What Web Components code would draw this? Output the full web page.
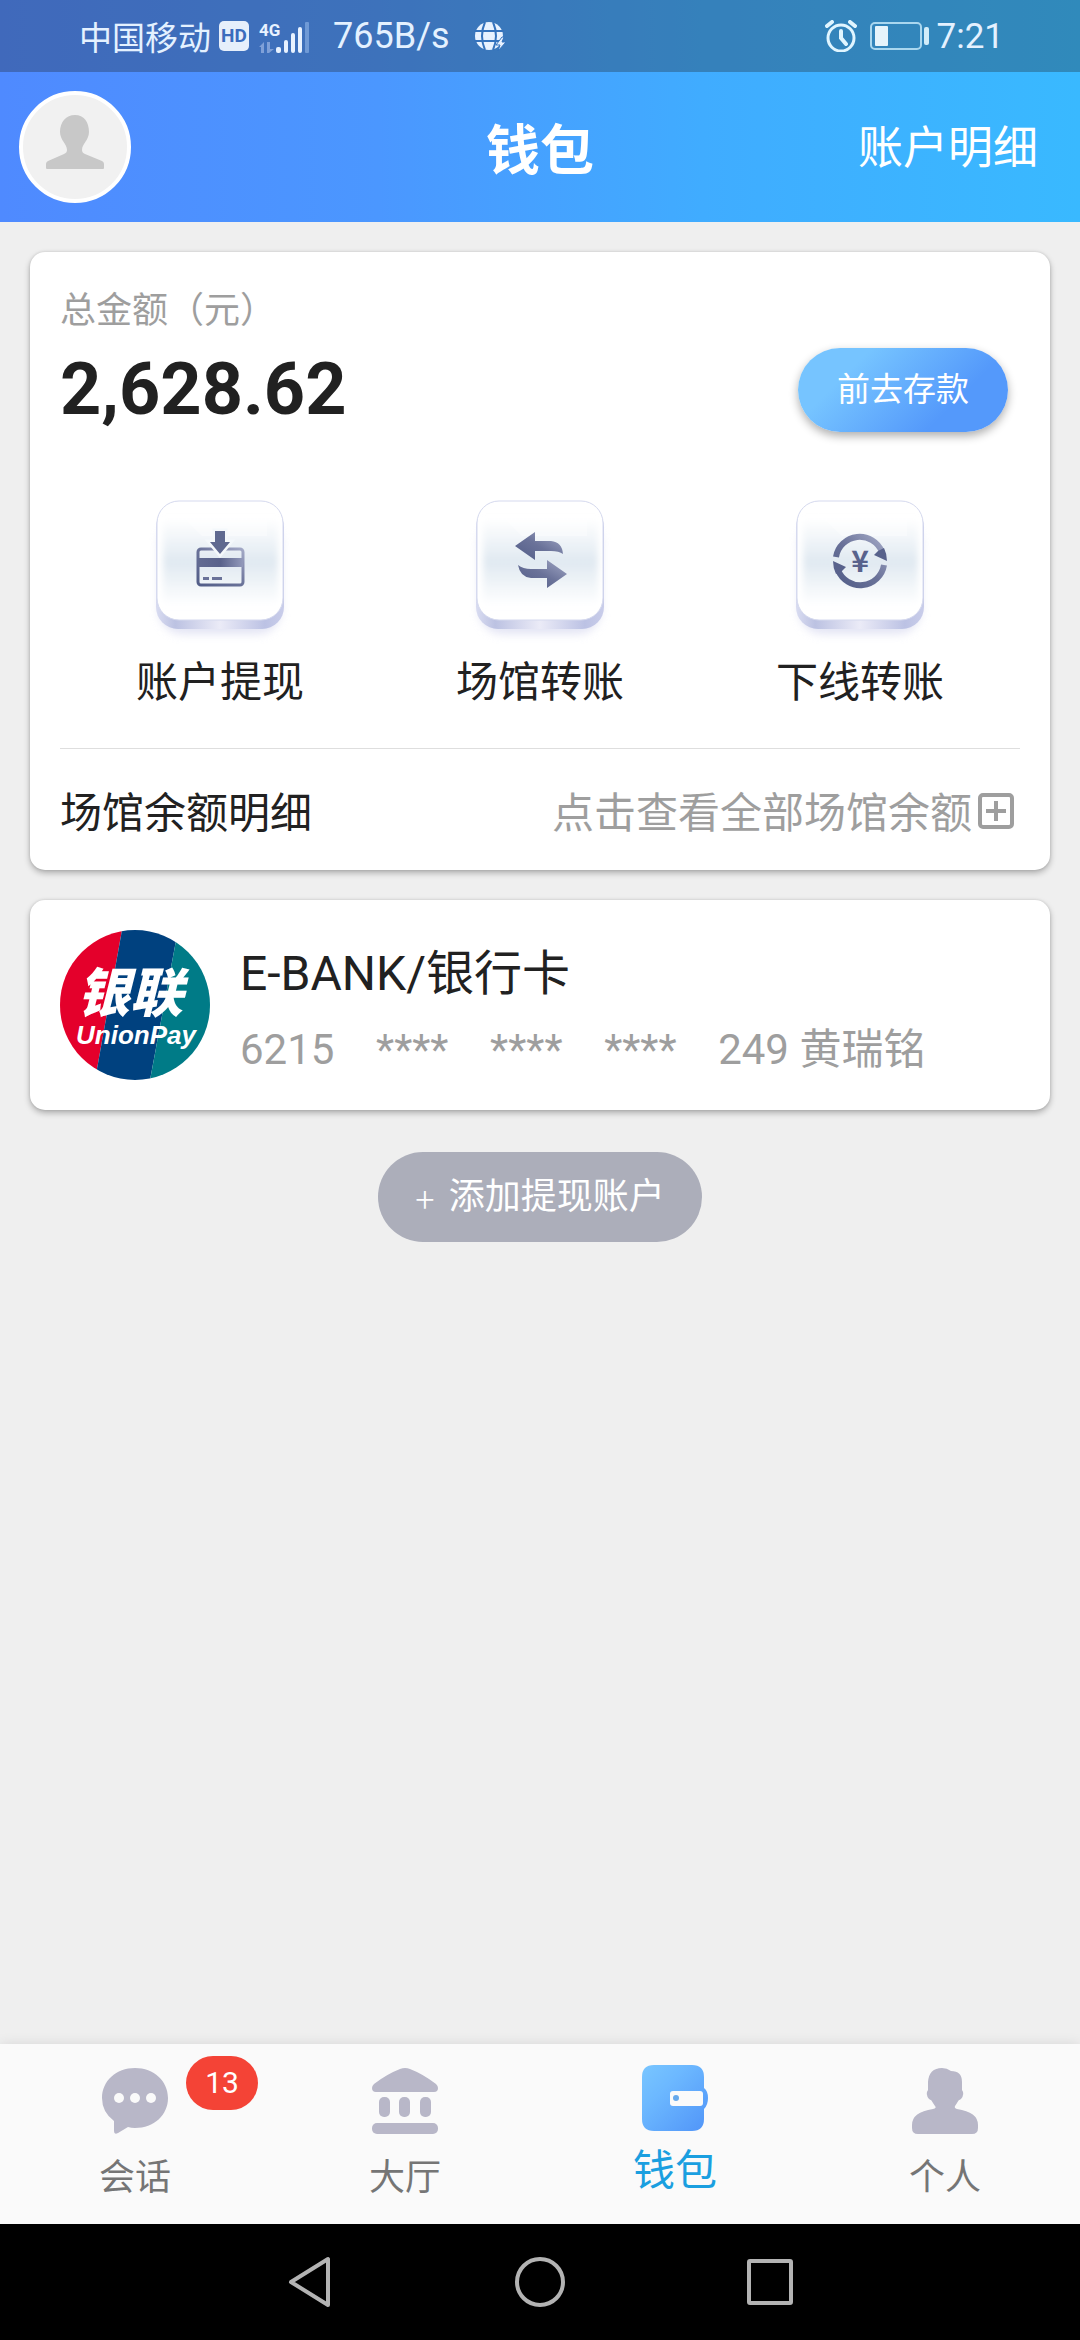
<!DOCTYPE html>
<html lang="zh-CN">
<head>
<meta charset="utf-8">
<meta name="viewport" content="width=device-width, initial-scale=1">
<title>钱包</title>
<style>
html, body {
    margin: 0;
    min-height: 100%;
}

body {
    background: #efefef;
    color: #212121;
    font-family: Roboto, "Noto Sans CJK SC", sans-serif;
    font-size: 42px;
}
</style>
</head>
<body>
<wallet-app></wallet-app>

<script>
const icons = {
    signal: `<svg width="50" height="34" viewBox="0 -2 50 34">
        <text x="0" y="15" font-size="17" font-weight="700" font-family="Roboto, sans-serif" fill="#e8f2ff">4G</text>
        <g fill="#7fa0d8"><path d="M5 21v11H2v-6H0zM8 21h3v7h4l-5 4H8z"/></g>
        <g fill="#e8f2ff"><rect x="17" y="26" width="5" height="6" rx="2"/><rect x="25" y="19" width="4" height="13" rx="2"/><rect x="32" y="12" width="4" height="20" rx="2"/><rect x="39" y="6" width="4" height="26" rx="2"/></g>
        <rect x="46" y="1" width="4" height="31" rx="1" fill="#6f9ad6"/></svg>`,
    globe: `<svg width="33" height="30" viewBox="0 0 33 30">
        <circle cx="15" cy="15" r="14" fill="#e8f2ff"/>
        <g fill="none" stroke="#3573bd" stroke-width="2"><path d="M0 10h30M0 20h30M11 1Q5 15 11 29M19 1q6 14 0 28"/></g>
        <path d="M28 16l-6 8h4l-2 6 8-9h-4l2-5z" fill="#e8f2ff" stroke="#3573bd" stroke-width="1"/></svg>`,
    alarm: `<svg width="32" height="32" viewBox="0 0 32 32" fill="none" stroke="#e0f5ff" stroke-width="3" stroke-linecap="round">
        <circle cx="16" cy="18" r="13"/><path d="M16 11v7l5 6M2 6l5-4M30 6l-5-4" stroke-width="4"/></svg>`,
    battery: `<svg width="60" height="28" viewBox="0 0 60 28">
        <rect x="1" y="1" width="50" height="26" rx="4" fill="none" stroke="#a9d7ef" stroke-width="2"/>
        <rect x="5" y="4" width="13" height="20" rx="1" fill="#e6f4fb"/><rect x="54" y="5" width="5" height="18" rx="2" fill="#d2edf9"/></svg>`,
    avatar: `<svg width="112" height="112" viewBox="0 0 112 112">
        <circle cx="56" cy="56" r="54" fill="#f1f1f1" stroke="#fff" stroke-width="4"/>
        <path fill="#c8c8c8" d="M56 24c9 0 14 7 14 17 0 8-7 12-7 18 0 2 1 3 3 4l17 7q2 1 2 3v4q0 1-1 1H28q-1 0-1-1v-4q0-2 2-3l16-7c2-1 3-2 3-4 0-6-7-10-7-18 0-10 6-17 15-17z"/></svg>`,
    plusBox: `<svg width="36" height="36" viewBox="0 0 36 36" fill="none" stroke="#9e9e9e" stroke-width="4">
        <rect x="2" y="2" width="32" height="32" rx="3"/><path d="M18 8v20M8 18h20"/></svg>`,
    unionpay: `<svg width="150" height="150" viewBox="0 0 150 150">
        <clipPath id="disc"><circle cx="75" cy="75" r="75"/></clipPath>
        <g clip-path="url(#disc)"><path d="M0 0h62L35 150H0z" fill="#e4002b"/><path d="M62 0h56L90 150H35z" fill="#00417f"/><path d="M118 0h32v150H90z" fill="#007b87"/></g>
        <g fill="#fff" font-style="italic">
        <text x="70" y="82" text-anchor="middle" font-size="53" font-weight="900" font-family="Noto Sans CJK SC, sans-serif">银联</text>
        <text x="76" y="114" text-anchor="middle" font-size="26" font-weight="700" font-family="Liberation Sans, sans-serif">UnionPay</text></g></svg>`,
    chat: `<svg width="66" height="66" viewBox="0 0 66 66">
        <path fill="#b8b7c8" d="M33 0c19 0 33 13 33 30S52 60 33 60q-4 0-7-1l-10 6q-4 2-4-2V53Q0 44 0 30C0 13 14 0 33 0z"/>
        <g fill="#fafafa"><circle cx="17" cy="30" r="5"/><circle cx="33" cy="30" r="5"/><circle cx="49" cy="30" r="5"/></g></svg>`,
    hall: `<svg width="66" height="66" viewBox="0 0 66 66" fill="#b8b7c8">
        <path d="M28 1q5-2 10 0 13 5 26 15 2 2 2 4 0 4-4 4H4q-4 0-4-4 0-2 2-4Q15 6 28 1z"/>
        <rect x="7" y="29" width="11" height="20" rx="5"/><rect x="27" y="29" width="11" height="20" rx="5"/><rect x="48" y="29" width="11" height="20" rx="5"/>
        <rect y="55" width="66" height="11" rx="5"/></svg>`,
    wallet: `<svg width="66" height="66" viewBox="0 0 66 66">
        <linearGradient id="blue" x1="0" y1="0" x2="1" y2="1"><stop offset="0" stop-color="#79c6ff"/><stop offset=".35" stop-color="#6cb8ff"/><stop offset="1" stop-color="#5094f8"/></linearGradient>
        <path fill="url(#blue)" d="M12 0h38q12 0 12 12v11q4 3 4 10t-4 11v10q0 12-12 12H12Q0 66 0 54V12Q0 0 12 0z"/>
        <rect x="28" y="26" width="33" height="15" rx="3" fill="#fafafa"/><circle cx="34" cy="33" r="3" fill="#66a9ec"/></svg>`,
    person: `<svg width="66" height="66" viewBox="0 0 66 66">
        <path fill="#b8b7c8" d="M30 0q5 0 9 3 11 0 11 11v8q3 4-1 9-3 1-4 4l-2 3q-1 2 2 3 21 3 21 16v3q0 6-6 6H6q-6 0-6-6v-3q0-13 21-16 4-1 2-3l-2-3q-1-3-4-4-4-5-1-9v-8Q17 0 30 0z"/></svg>`,
    back: `<svg width="46" height="54" viewBox="0 0 46 54"><path d="M41 4v46L4 27z"/></svg>`,
    home: `<svg width="52" height="52" viewBox="0 0 52 52"><circle cx="26" cy="26" r="23"/></svg>`,
    recent: `<svg width="46" height="46" viewBox="0 0 46 46"><rect x="2" y="2" width="42" height="42" rx="1"/></svg>`,
}

// symbols that sit on the glass tiles, all on the tile's 150x160 grid
const symbols = {
    withdraw: `<rect x="53" y="59" width="45" height="36" rx="3" fill="none" stroke="url(#ink)" stroke-width="3"/>
        <rect x="53" y="68" width="45" height="9" fill="url(#band)"/>
        <path d="M58 87h6v3h-6zM67 87h10v3H67z" fill="#6a7299"/>
        <path d="M70 41h10v11h5L75 64 65 52h5z" fill="#5f6990" stroke="#f4f8fb" stroke-width="5" paint-order="stroke"/>`,
    transfer: `<path fill="url(#ink)" d="M50 56l20-14v9h16q11 1 12 13-4-3-12-3H70v9z"/>
        <path fill="url(#ink)" d="M102 84L82 98V88H66q-11-1-13-13 5 4 13 4h16v-9z"/>`,
    exchange: `<g fill="none" stroke="url(#ink)" stroke-width="6"><path d="M51 67a24 24 0 0 1 46-5M99 75a24 24 0 0 1-46 5"/></g>
        <g fill="#58628c"><path d="M89 65l13 6q0-7-3-13l-6 3zM61 77l-13-6q0 7 3 13l6-3z"/>
        <text x="75" y="82" text-anchor="middle" font-size="30" font-weight="700" font-family="Noto Sans CJK SC, sans-serif">¥</text></g>`,
}

function tile(name) {
    return `<svg width="150" height="160" viewBox="0 0 150 160" aria-hidden="true">
        <defs>
        <linearGradient id="ink" x1="0" y1="1" x2="1" y2="0"><stop offset="0" stop-color="#525d88"/><stop offset=".5" stop-color="#6a7299"/><stop offset="1" stop-color="#a3a9c6"/></linearGradient>
        <linearGradient id="band"><stop offset="0" stop-color="#626b92"/><stop offset=".5" stop-color="#59628b"/><stop offset="1" stop-color="#9299ba"/></linearGradient>
        <linearGradient id="side"><stop offset="0" stop-color="#d9dcf1"/><stop offset=".15" stop-color="#bcc2e2"/><stop offset=".5" stop-color="#ebebf7"/><stop offset=".85" stop-color="#bcc2e4"/><stop offset="1" stop-color="#c9cdea"/></linearGradient>
        <linearGradient id="glass" x1="0" y1="0" x2="0" y2="1"><stop offset="0" stop-color="#e2ebf2" stop-opacity="0"/><stop offset=".5" stop-color="#e0e9f1"/><stop offset="1" stop-color="#e2ebf2" stop-opacity="0"/></linearGradient>
        <filter id="soft" x="-20%" y="-20%" width="140%" height="140%"><feGaussianBlur stdDeviation="5"/></filter>
        <filter id="haze" x="-20%" y="-20%" width="140%" height="140%"><feGaussianBlur stdDeviation="3"/></filter>
        </defs>
        <rect x="14" y="30" width="122" height="114" rx="24" fill="#d3d5ee" opacity=".65" filter="url(#soft)"/>
        <rect x="11" y="15" width="128" height="124" rx="22" fill="url(#side)"/>
        <rect x="12" y="11" width="126" height="119" rx="22" fill="#fff" stroke="#d5d9ee" stroke-width="1"/>
        <rect x="18" y="28" width="115" height="88" fill="url(#glass)" filter="url(#haze)"/>
        <path d="M32 22h90v24H57z" fill="#fff" opacity=".35"/>
        ${symbols[name]}</svg>`
}

// opens a shadow root and fills it with styles and markup
function fill(element, css, html) {
    const template = document.createElement("template")
    template.innerHTML = `<style>
        * { box-sizing: border-box; }
        svg { display: block; flex: none; }
        button, a { font: inherit; color: inherit; text-decoration: none; background: none; border: 0; padding: 0; margin: 0; }
        ${css}</style>${html}`
    element.attachShadow({mode: "open"}).appendChild(template.content.cloneNode(true))
}

class StatusBar extends HTMLElement {
    constructor() {
        super()
        fill(this, `
        :host {
            display: flex;
            justify-content: space-between;
            align-items: center;
            height: 72px;
            padding: 0 76px 0 79px;
            background: rgba(30, 30, 30, 0.3);
            color: #e4f1ff;
            font-size: 36px;
        }
        div { display: flex; align-items: center; }
        .carrier { font-size: 33px; }
        .hd {
            width: 30px;
            margin: 0 10px 0 8px;
            border-radius: 5px;
            background: #e6effb;
            color: #3b6cbd;
            font-size: 19px;
            font-weight: 700;
            line-height: 30px;
            text-align: center;
        }
        .speed { margin: 0 24px; }
        .right { gap: 13px; }
        .time { margin-left: -6px; font-size: 35px; }
        `, `
        <div><span class="carrier">中国移动</span><span class="hd">HD</span>${icons.signal}<span class="speed">765B/s</span>${icons.globe}</div>
        <div class="right">${icons.alarm}${icons.battery}<span class="time">7:21</span></div>`)
    }
}

class AppHeader extends HTMLElement {
    constructor() {
        super()
        fill(this, `
        :host {
            display: block;
            background: linear-gradient(90deg, #4f8aff, #4b97ff 35%, #40acff 65%, #39b9ff);
            color: #fff;
        }
        header {
            display: grid;
            grid-template-columns: 1fr auto 1fr;
            align-items: center;
            height: 150px;
            padding: 0 42px 0 19px;
        }
        button { justify-self: start; }
        h1 { margin: 0 0 0 23px; padding-top: 10px; font-size: 54px; line-height: 64px; font-weight: 700; }
        a { justify-self: end; padding-top: 4px; font-size: 45px; line-height: 64px; }
        `, `
        <status-bar></status-bar>
        <header>
            <button aria-label="头像">${icons.avatar}</button>
            <h1><slot></slot></h1>
            <a href="#detail">账户明细</a>
        </header>`)
    }
}

class WalletCard extends HTMLElement {
    constructor() {
        super()
        fill(this, `
        :host {
            display: block;
            padding: 30px;
            border-radius: 15px;
            background: #fff;
            box-shadow: 0 3px 6px rgba(0, 0, 0, 0.28), 0 0 3px rgba(0, 0, 0, 0.12);
        }
        `, `<slot></slot>`)
    }
}

class QuickAction extends HTMLElement {
    constructor() {
        super()
        fill(this, `
        :host { display: flex; justify-content: center; }
        button { display: flex; flex-direction: column; align-items: center; line-height: 66px; }
        `, `<button>${tile(this.getAttribute("icon"))}<span><slot></slot></span></button>`)
    }
}

class BalancePanel extends HTMLElement {
    constructor() {
        super()
        fill(this, `
        :host { display: block; margin-bottom: -6px; }
        .label { color: #9e9e9e; font-size: 36px; line-height: 58px; }
        .total {
            display: flex;
            align-items: center;
            justify-content: space-between;
            margin-top: 8px;
            padding-right: 12px;
        }
        .amount { font-size: 72px; font-weight: 700; line-height: 84px; }
        .deposit {
            width: 210px;
            height: 84px;
            border-radius: 42px;
            background: linear-gradient(135deg, #76c4ff 25%, #5499fb 72%);
            box-shadow: 0 4px 10px rgba(0, 0, 0, 0.32);
            color: #fff;
            font-size: 33px;
            line-height: 84px;
        }
        .actions {
            display: grid;
            grid-template-columns: repeat(3, 1fr);
            margin-top: 58px;
            padding-bottom: 32px;
            border-bottom: 1px solid #dedede;
        }
        .venue {
            display: flex;
            justify-content: space-between;
            align-items: center;
            padding: 33px 6px 0 0;
            line-height: 64px;
        }
        .venue button { display: flex; align-items: center; gap: 6px; color: #9e9e9e; }
        .venue svg { margin-bottom: 6px; }
        `, `
        <div class="label">总金额（元）</div>
        <div class="total"><span class="amount">2,628.62</span><button class="deposit">前去存款</button></div>
        <div class="actions">
            <quick-action icon="withdraw">账户提现</quick-action>
            <quick-action icon="transfer">场馆转账</quick-action>
            <quick-action icon="exchange">下线转账</quick-action>
        </div>
        <div class="venue"><span>场馆余额明细</span><button>点击查看全部场馆余额${icons.plusBox}</button></div>`)
    }
}

class BankAccount extends HTMLElement {
    constructor() {
        super()
        fill(this, `
        :host { display: flex; gap: 30px; }
        .text { display: flex; flex-direction: column; gap: 20px; padding-top: 16px; line-height: 56px; }
        .name { font-size: 48px; }
        .number { color: #9e9e9e; white-space: pre; }
        `, `
        ${icons.unionpay}
        <div class="text"><span class="name"><slot name="name"></slot></span><span class="number"><slot></slot></span></div>`)
    }
}

class TabItem extends HTMLElement {
    constructor() {
        super()
        const badge = this.getAttribute("badge")
        fill(this, `
        :host { display: block; flex: 1; color: #757575; font-size: 36px; }
        :host([active]) { color: #1a9fe0; font-size: 42px; }
        a {
            display: flex;
            flex-direction: column;
            align-items: center;
            gap: 18px;
            height: 180px;
            padding-top: 24px;
            line-height: 52px;
        }
        :host([active]) a { gap: 14px; padding-top: 21px; }
        .icon { position: relative; }
        .badge {
            position: absolute;
            top: -12px;
            left: 84px;
            width: 72px;
            border-radius: 27px;
            background: #f44336;
            color: #fff;
            font-size: 30px;
            line-height: 54px;
            text-align: center;
        }
        `, `
        <a href="#${this.getAttribute("icon")}">
            <span class="icon">${icons[this.getAttribute("icon")]}${badge ? `<span class="badge">${badge}</span>` : ""}</span>
            <span><slot></slot></span>
        </a>`)
    }
}

class TabBar extends HTMLElement {
    constructor() {
        super()
        fill(this, `
        :host { display: block; background: #fafafa; box-shadow: 0 0 12px rgba(0, 0, 0, 0.1); }
        nav { display: flex; }
        `, `<nav><slot></slot></nav>`)
    }
}

class SystemNav extends HTMLElement {
    constructor() {
        super()
        fill(this, `
        :host {
            display: flex;
            justify-content: center;
            align-items: center;
            gap: 130px;
            height: 116px;
            background: #000;
            position: relative;
        }
        button { display: flex; justify-content: center; width: 100px; }
        svg { fill: none; stroke: #b3b3b3; stroke-width: 4; stroke-linejoin: round; }
        `, `
        <button aria-label="返回">${icons.back}</button>
        <button aria-label="主页">${icons.home}</button>
        <button aria-label="最近">${icons.recent}</button>`)
    }
}

class WalletApp extends HTMLElement {
    constructor() {
        super()
        fill(this, `
        :host { display: flex; flex-direction: column; min-height: 100vh; }
        main {
            flex: 1;
            display: flex;
            flex-direction: column;
            gap: 30px;
            padding: 30px;
        }
        .add {
            display: flex;
            align-items: center;
            justify-content: center;
            gap: 14px;
            align-self: center;
            width: 324px;
            height: 90px;
            margin-top: 12px;
            border-radius: 45px;
            background: #acaeba;
            color: #fff;
            font-size: 36px;
            line-height: 90px;
        }
        .plus { font-family: "Noto Sans CJK SC", sans-serif; font-weight: 300; }
        `, `
        <app-header>钱包</app-header>
        <main>
            <wallet-card><balance-panel></balance-panel></wallet-card>
            <wallet-card>
                <bank-account><span slot="name">E-BANK/银行卡</span>6215&nbsp;&nbsp;&nbsp;&nbsp;****&nbsp;&nbsp;&nbsp;&nbsp;****&nbsp;&nbsp;&nbsp;&nbsp;****&nbsp;&nbsp;&nbsp;&nbsp;249 黄瑞铭</bank-account>
            </wallet-card>
            <button class="add"><span class="plus">+</span><span>添加提现账户</span></button>
        </main>
        <tab-bar>
            <tab-item icon="chat" badge="13">会话</tab-item>
            <tab-item icon="hall">大厅</tab-item>
            <tab-item icon="wallet" active>钱包</tab-item>
            <tab-item icon="person">个人</tab-item>
        </tab-bar>
        <system-nav></system-nav>`)
    }
}

customElements.define("status-bar", StatusBar)
customElements.define("app-header", AppHeader)
customElements.define("wallet-card", WalletCard)
customElements.define("quick-action", QuickAction)
customElements.define("balance-panel", BalancePanel)
customElements.define("bank-account", BankAccount)
customElements.define("tab-item", TabItem)
customElements.define("tab-bar", TabBar)
customElements.define("system-nav", SystemNav)
customElements.define("wallet-app", WalletApp)
</script>
</body>
</html>
